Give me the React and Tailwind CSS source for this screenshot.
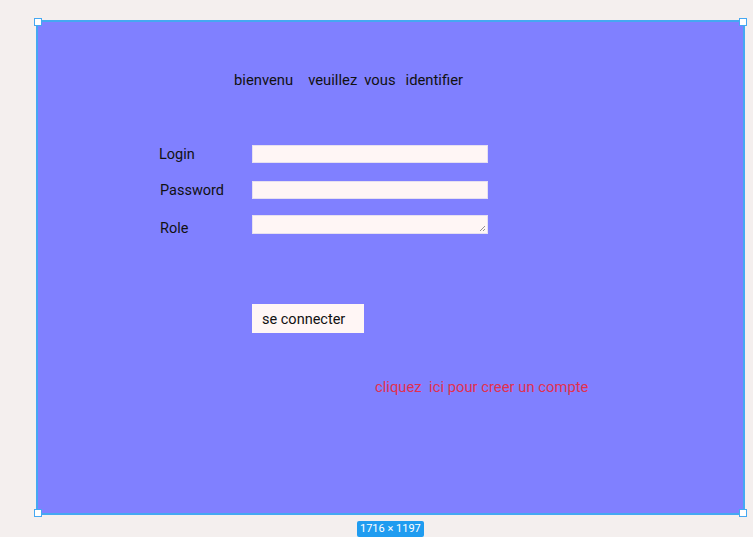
import React from 'react';

export default function App() {
  return (
    <div
      className="w-[753px] h-[537px] bg-[#f4efee] pt-[20px] pl-[36px] overflow-hidden"
      style={{ fontFamily: 'Roboto, "Liberation Sans", sans-serif' }}
    >
      {/* selected frame */}
      <div className="relative w-[709px] h-[495px] border-2 border-[#45a8f2] bg-[#8080ff]">
        {/* corner handles */}
        <div className="absolute -left-[4px] -top-[4px] w-[8px] h-[8px] bg-white border border-[#45a8f2]" />
        <div className="absolute -right-[4px] -top-[4px] w-[8px] h-[8px] bg-white border border-[#45a8f2]" />
        <div className="absolute -left-[4px] -bottom-[4px] w-[8px] h-[8px] bg-white border border-[#45a8f2]" />
        <div className="absolute -right-[4px] -bottom-[4px] w-[8px] h-[8px] bg-white border border-[#45a8f2]" />

        {/* title */}
        <div className="mt-[48px] ml-[196px] flex text-[14.8px] leading-[20px] text-[#111]">
          <span>bienvenu</span>
          <span className="ml-[15px]">veuillez</span>
          <span className="ml-[7px]">vous</span>
          <span className="ml-[10px]">identifier</span>
        </div>

        {/* form */}
        <div className="mt-[55px] flex flex-col text-[14.5px] text-[#111]">
          <div className="flex items-center h-[18px]">
            <span className="w-[93px] pl-[121px] box-content mt-[1px]">Login</span>
            <div className="w-[236px] h-[18px] bg-[#fff6f5] border border-[#e6e0f0]" />
          </div>
          <div className="flex items-center h-[18px] mt-[18px]">
            <span className="w-[92px] pl-[122px] box-content mt-[1px]">Password</span>
            <div className="w-[236px] h-[18px] bg-[#fff6f5] border border-[#e6e0f0]" />
          </div>
          <div className="flex h-[19px] mt-[16px]">
            <span className="w-[92px] pl-[122px] box-content leading-[19px] mt-[4px]">Role</span>
            <div className="relative w-[236px] h-[19px] bg-[#fff6f5] border border-[#e6e0f0]">
              <svg className="absolute right-[1px] bottom-[1px]" width="7" height="7" viewBox="0 0 7 7">
                <path d="M6 1 L1 6 M6 4 L4 6" stroke="#777" strokeWidth="0.8" />
              </svg>
            </div>
          </div>
        </div>

        {/* button */}
        <div className="mt-[70px] ml-[214px] w-[112px] h-[29px] bg-[#fff6f5] flex items-center pl-[10px] pt-[2px] text-[14.5px] text-[#111]">
          se connecter
        </div>

        {/* link */}
        <div className="mt-[44px] ml-[337px] text-[14.8px] leading-[20px] text-[#e2304f] whitespace-pre">
          cliquez  ici pour creer un compte
        </div>
      </div>

      {/* size badge */}
      <div className="flex justify-start ml-[321px] mt-[6px]">
        <div className="h-[16px] px-[3px] rounded-[2px] bg-[#1f9cf0] text-white text-[11px] leading-[16px]">
          1716 × 1197
        </div>
      </div>
    </div>
  );
}
